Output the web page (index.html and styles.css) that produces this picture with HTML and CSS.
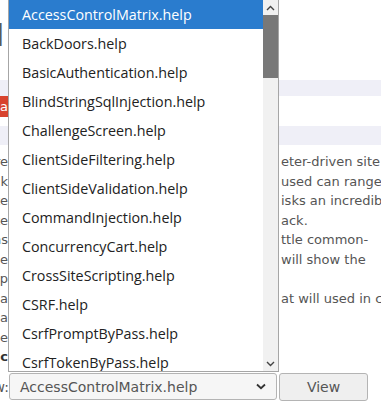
FILE: index.html
```html
<!DOCTYPE html>
<html lang="en">
<head>
  <meta charset="UTF-8" />
  <meta name="viewport" content="width=device-width, initial-scale=1.0"/>
  <title>Access Control Lesson</title>
  <link rel="stylesheet" href="styles.css">
</head>
<body>
  <div class="page">
    <div class="lesson">
      <div class="row head"><span class="edge">Access Control</span></div>

      <div class="band"></div>
      <div class="row badge-row"><span class="edge"><span class="badge">Hints la</span></span></div>
      <div class="band second"></div>

      <div class="text">
        <div class="row"><span class="edge">are</span><span class="mid">In a path based access control scheme, param</span><span class="tail">eter-driven site</span></div>
        <div class="row"><span class="edge">back</span><span class="mid">the files and directories that the attacker</span><span class="tail">used can range</span></div>
        <div class="row"><span class="edge">site</span><span class="mid">from private data to config files, this r</span><span class="tail">isks an incredib</span></div>
        <div class="row"><span class="edge">te</span><span class="mid">quantity of damage from a single att</span><span class="tail">ack.</span></div>
        <div class="row"><span class="edge">tions</span><span class="mid">The following exercise uses a li</span><span class="tail">ttle common-</span></div>
        <div class="row"><span class="edge">be</span><span class="mid">sense path traversal; the server </span><span class="tail">will show the</span></div>
        <div class="row"><span class="edge">help</span><span class="mid"></span><span class="tail"></span></div>
        <div class="row"><span class="edge">sa</span><span class="mid">Choose a file from the list below th</span><span class="tail">at will used in c</span></div>
        <div class="row"><span class="edge">ba</span><span class="mid"></span><span class="tail"></span></div>
        <div class="row"><span class="edge">the</span><span class="mid"></span><span class="tail"></span></div>
        <div class="row"><span class="edge strong">Acc</span><span class="mid"></span><span class="tail"></span></div>
      </div>

      <div class="controls">
        <span class="edge">Choose the file to view:</span>
        <div class="select">
          <span>AccessControlMatrix.help</span>
          <svg width="10" height="7" viewBox="0 0 10 7"><path d="M1 1.5 L5 5.2 L9 1.5" fill="none" stroke="#333" stroke-width="1.8"/></svg>
        </div>
        <button class="btn">View</button>
      </div>
    </div>

    <div class="popup">
      <ul class="options">
        <li class="selected">AccessControlMatrix.help</li>
        <li>BackDoors.help</li>
        <li>BasicAuthentication.help</li>
        <li>BlindStringSqlInjection.help</li>
        <li>ChallengeScreen.help</li>
        <li>ClientSideFiltering.help</li>
        <li>ClientSideValidation.help</li>
        <li>CommandInjection.help</li>
        <li>ConcurrencyCart.help</li>
        <li>CrossSiteScripting.help</li>
        <li>CSRF.help</li>
        <li>CsrfPromptByPass.help</li>
        <li>CsrfTokenByPass.help</li>
      </ul>
      <div class="scrollbar">
        <span class="arrow"><svg width="9" height="6" viewBox="0 0 9 6"><path d="M1 5 L4.5 1.5 L8 5" fill="none" stroke="#444" stroke-width="1.4"/></svg></span>
        <span class="thumb"></span>
        <span class="track"></span>
        <span class="arrow"><svg width="9" height="6" viewBox="0 0 9 6"><path d="M1 1 L4.5 4.5 L8 1" fill="none" stroke="#444" stroke-width="1.4"/></svg></span>
      </div>
    </div>
  </div>
</body>
</html>
```

FILE: styles.css
```css
body {
  margin: 0;
  font-family: 'DejaVu Sans', sans-serif;
  font-size: 13px;
  color: #555;
  background: #fff;
  overflow: hidden;
}

.page {
  position: relative;
  width: 381px;
  height: 412px;
  overflow: hidden;
}

.row {
  display: grid;
  grid-template-columns: 8px 271px 1fr;
  white-space: nowrap;
}

.edge {
  display: flex;
  justify-content: flex-end;
  overflow: hidden;
  white-space: nowrap;
}

.mid,
.tail {
  overflow: hidden;
}

.tail {
  padding-left: 2px;
}

.head {
  height: 58px;
  padding-top: 16px;
  font-size: 30px;
  line-height: 40px;
  font-weight: bold;
  color: #5a5a5a;
  box-sizing: border-box;
}

.head .edge {
  padding-right: 4px;
}

.band {
  height: 16px;
  margin-top: 22px;
  background: #efeff7;
}

.band.second {
  height: 19px;
  margin-top: 9px;
}

.badge-row {
  height: 21px;
}

.badge {
  display: block;
  height: 21px;
  background: #d8432e;
  color: #fff;
  padding-left: 4px;
  line-height: 21px;
}

.text {
  margin-top: 7px;
  line-height: 19.5px;
}

.strong {
  font-weight: bold;
  color: #333;
}

.controls {
  display: flex;
  align-items: center;
  margin-top: 6px;
  font-size: 14px;
}

.controls .edge {
  width: 9px;
  flex: none;
}

.select {
  width: 268px;
  height: 27px;
  box-sizing: border-box;
  border: 1px solid #b4b4b4;
  border-radius: 3px;
  background: #f6f6f6;
  display: flex;
  align-items: center;
  justify-content: space-between;
  padding: 0 10px;
  color: #555;
}

.btn {
  margin-left: 2px;
  width: 89px;
  height: 28px;
  border: 1px solid #b4b4b4;
  border-radius: 3px;
  background: #efefef;
  font-family: 'DejaVu Sans', sans-serif;
  font-size: 14px;
  color: #555;
}

.popup {
  position: absolute;
  left: 8px;
  top: -1px;
  width: 269px;
  height: 371px;
  border: 1px solid #a6a6a6;
  background: #fff;
  display: flex;
}

.options {
  list-style: none;
  margin: 0;
  padding: 0;
  width: 254px;
  overflow: hidden;
  font-family: 'Open Sans', sans-serif;
  font-size: 14.3px;
  color: #222;
}

.options li {
  height: 29px;
  line-height: 29px;
  padding-left: 13px;
  white-space: nowrap;
}

.options li.selected {
  background: #2a7cce;
  color: #fff;
}

.scrollbar {
  width: 15px;
  display: flex;
  flex-direction: column;
  background: #f1f1f1;
}

.arrow {
  height: 15px;
  display: flex;
  align-items: center;
  justify-content: center;
  background: #f1f1f1;
}

.thumb {
  height: 63px;
  background: #787878;
}

.track {
  flex: 1;
}
```
